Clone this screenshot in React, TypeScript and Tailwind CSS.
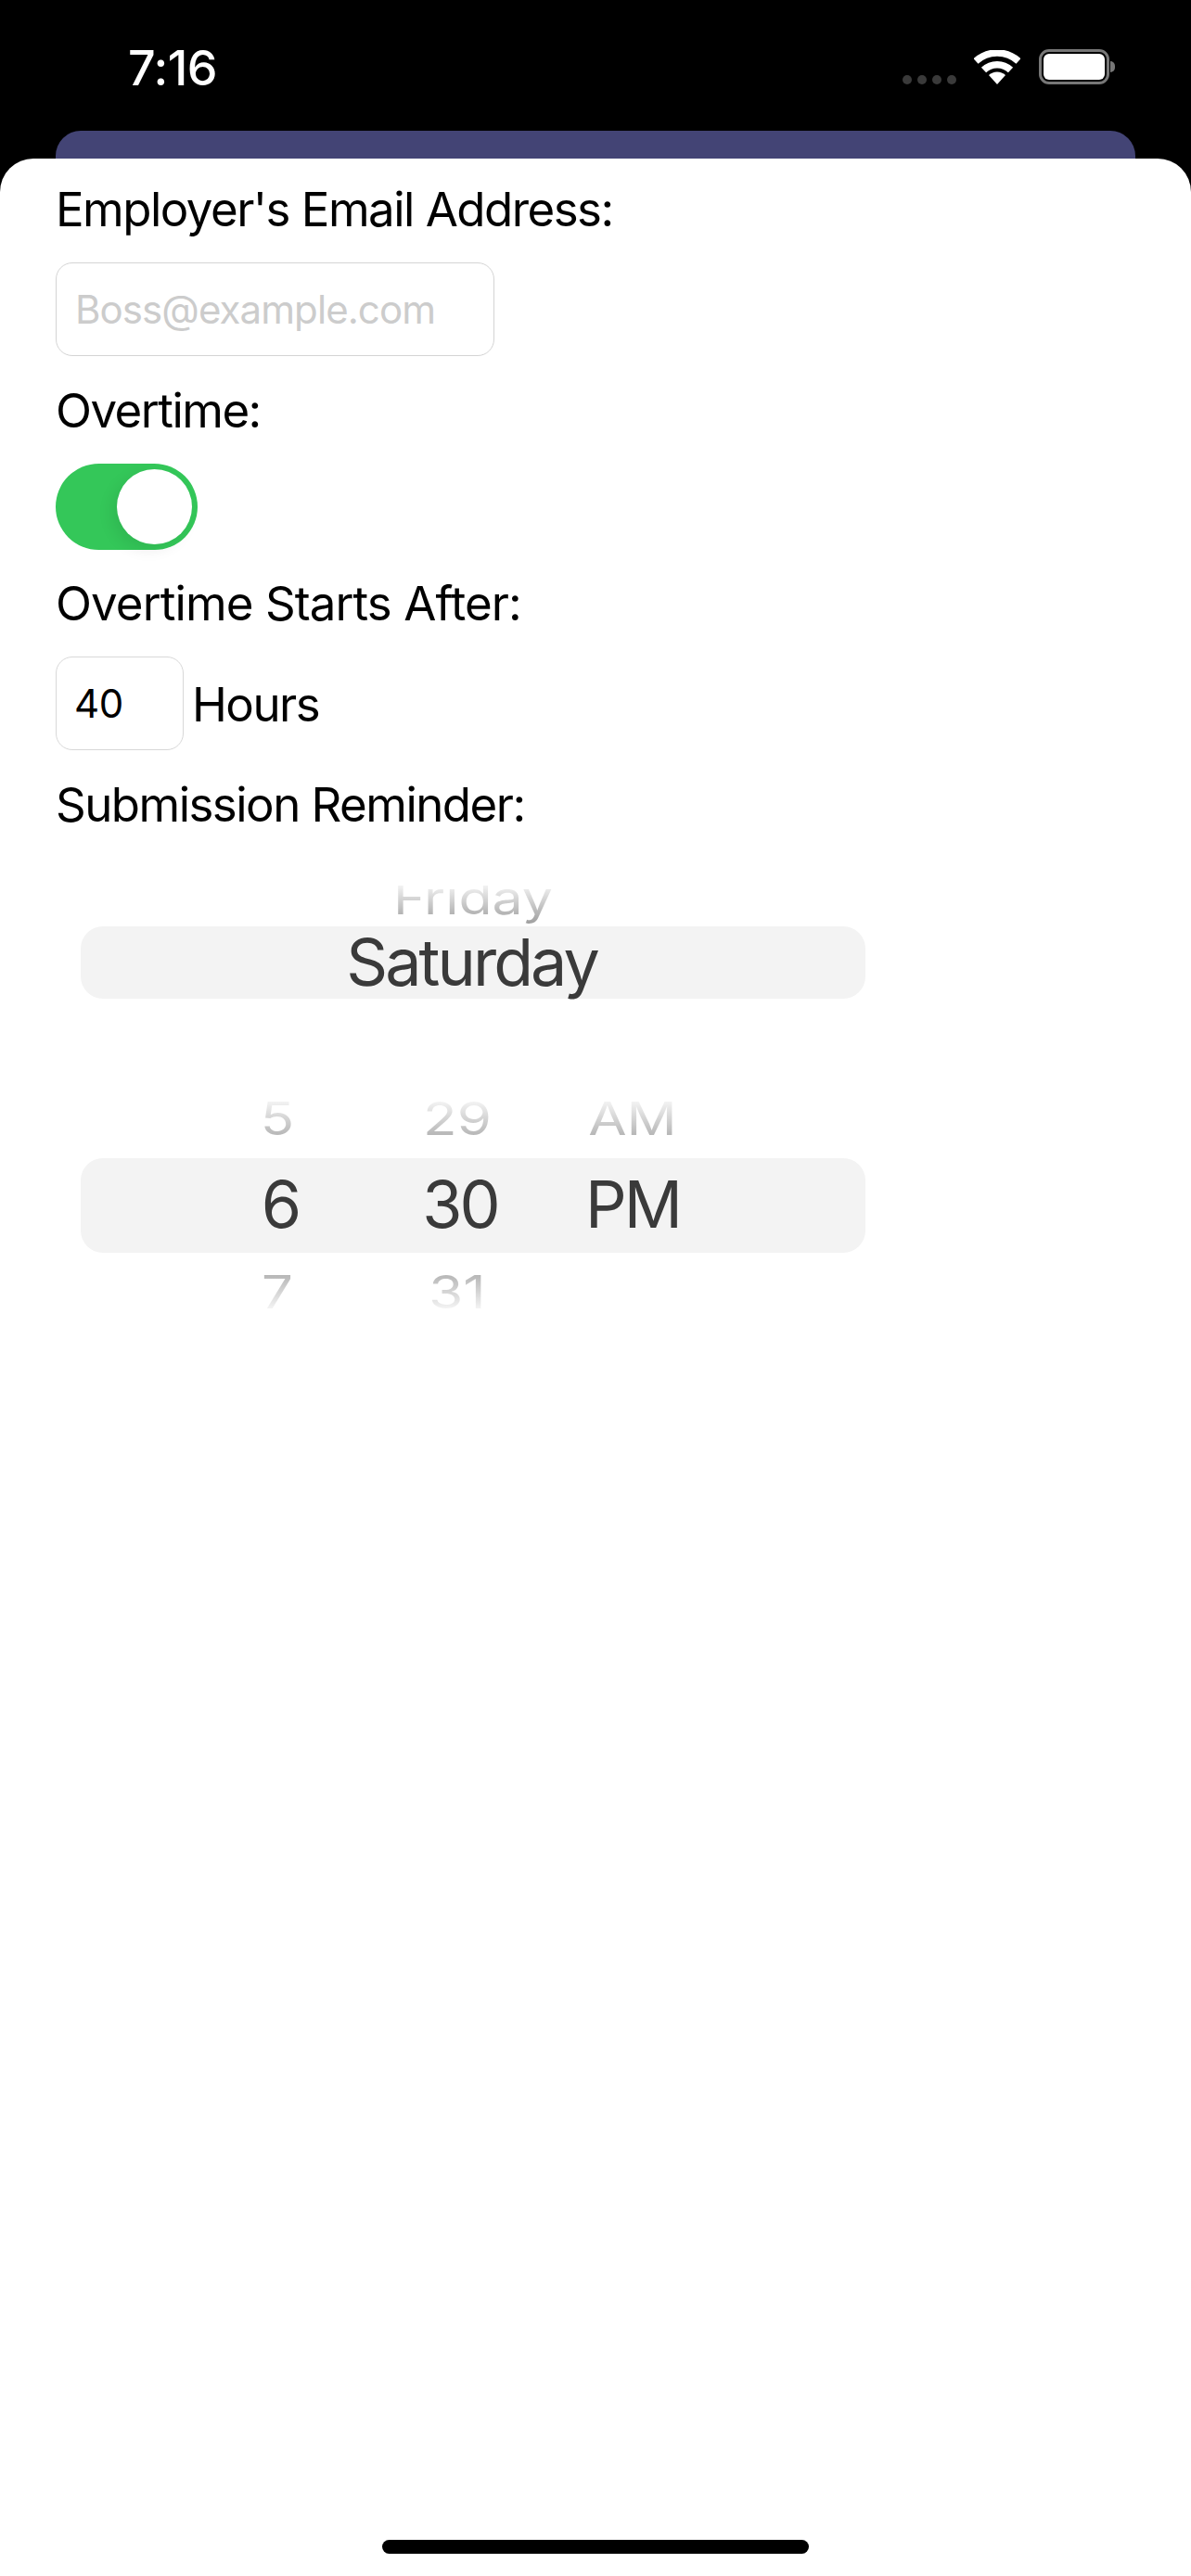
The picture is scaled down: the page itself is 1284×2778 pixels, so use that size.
const labelBase = "h-[61px] text-[51px] leading-[61px] text-black whitespace-nowrap";
const labelClass = `${labelBase} tracking-[-0.03em]`;

function Wifi() {
  return (
    <svg width="50" height="37" viewBox="0 0 50 37" fill="none">
      <path d="M2 12 A34 34 0 0 1 48 12" stroke="white" strokeWidth="7.5" />
      <path d="M10.5 21.5 A21 21 0 0 1 39.5 21.5" stroke="white" strokeWidth="7.5" />
      <path d="M25 37 L16 27 A13 13 0 0 1 34 27 Z" fill="white" />
    </svg>
  );
}

function StatusBar() {
  return (
    <div className="flex h-[141px] items-start pl-[138px]">
      <div className="mt-[46px] text-[52px] font-medium leading-[56px] tracking-[-0.01em] text-white">7:16</div>
      <div className="ml-auto mr-[82px] mt-[53px] flex items-end">
        <div className="mr-[19px] flex gap-[6px]">
          <span className="h-[10px] w-[10px] rounded-full bg-[#3a3a3a]" />
          <span className="h-[10px] w-[10px] rounded-full bg-[#3a3a3a]" />
          <span className="h-[10px] w-[10px] rounded-full bg-[#3a3a3a]" />
          <span className="h-[10px] w-[10px] rounded-full bg-[#3a3a3a]" />
        </div>
        <Wifi />
        <div className="ml-[20px] flex items-center">
          <div className="flex h-[38px] w-[76px] items-center justify-center rounded-[11px] border-[3px] border-[#777777]">
            <div className="h-[28px] w-[66px] rounded-[6px] bg-white" />
          </div>
          <div className="ml-[1px] h-[12px] w-[5px] rounded-r-full bg-[#777777]" />
        </div>
      </div>
    </div>
  );
}

function SideCell({ text, grad, w }: { text: string; grad: string; w: string }) {
  return (
    <div className={`flex items-center justify-center ${w}`}>
      <span className={`block h-[70px] origin-center scale-y-[0.82] bg-clip-text text-[60px] leading-[70px] text-transparent ${grad}`}>
        {text}
      </span>
    </div>
  );
}

function SideRow({ items, grad }: { items: string[]; grad: string }) {
  return (
    <div className="flex h-[36px] pl-[118px]">
      <SideCell text={items[0]} grad={grad} w="w-[188px]" />
      <SideCell text={items[1]} grad={grad} w="w-[200px]" />
      <SideCell text={items[2]} grad={grad} w="w-[178px]" />
    </div>
  );
}

export default function App() {
  const wheel = "text-[70px] tracking-[-0.042em] text-[#3a3a3a]";
  const up = "bg-linear-to-b from-[#f2f2f2] from-[20%] to-[#b8b8b8] to-[80%]";
  const down = "bg-linear-to-b from-[#b8b8b8] from-[20%] to-[#f2f2f2] to-[80%]";
  return (
    <div className="flex h-[2778px] w-[1284px] flex-col overflow-hidden bg-black font-['Inter',sans-serif]">
      <StatusBar />
      <div className="mx-[60px] h-[30px] shrink-0 rounded-t-[27px] bg-[#434475]" />
      <div className="relative flex-1 rounded-t-[36px] bg-white px-[60px] pt-[24px]">
        <div className={labelClass}>Employer's Email Address:</div>
        <div className="mt-[27px] flex h-[101px] w-[473px] items-center rounded-[18px] border-[1.5px] border-[#d4d4d4] pl-[20px] text-[42px] tracking-[-0.022em] text-[#cccccc]">
          Boss@example.com
        </div>
        <div className={`mt-[28px] ${labelClass}`}>Overtime:</div>
        <div className="mt-[27px] flex h-[93px] w-[153px] items-center justify-end rounded-full bg-[#34c759] pr-[6px]">
          <div className="h-[81px] w-[81px] rounded-full bg-white shadow-[-6px_6px_16px_rgba(0,0,0,0.08)]" />
        </div>
        <div className={`mt-[27px] ${labelBase} tracking-[-0.018em]`}>Overtime Starts After:</div>
        <div className="mt-[27px] flex items-center">
          <div className="flex h-[101px] w-[138px] items-center rounded-[18px] border-[1.5px] border-[#d8d8d8] pl-[19px] text-[42px] leading-[50px] tracking-[-0.01em] text-black">
            40
          </div>
          <div className="ml-[9px] mt-[2px] text-[51px] leading-[61px] tracking-[-0.03em] text-black">Hours</div>
        </div>
        <div className={`mt-[28px] ${labelClass}`}>Submission Reminder:</div>

        <div className="ml-[27px] mt-[57px] w-[846px]">
          <div className="flex h-[44px] justify-center overflow-hidden">
            <span className="-mt-[31px] block h-[90px] scale-y-[0.82] bg-linear-to-b from-[#f4f4f4] from-[30%] to-[#a0a0a0] to-[86%] bg-clip-text text-[59px] leading-[90px] text-transparent">
              Friday
            </span>
          </div>
          <div className={`flex h-[78px] items-center justify-center rounded-[24px] bg-[#f3f3f3] pb-[2px] pr-[3px] ${wheel}`}>Saturday</div>
        </div>

        <div className="ml-[27px] mt-[111px] w-[846px]">
          <SideRow items={["5", "29", "AM"]} grad={up} />
          <div className={`mt-[25px] flex h-[102px] items-center rounded-[24px] bg-[#f3f3f3] pb-[3px] pl-[118px] ${wheel}`}>
            <div className="w-[194px] text-center">6</div>
            <div className="w-[194px] text-center">30</div>
            <div className="w-[178px] text-center">PM</div>
          </div>
          <div className="mt-[24px]">
            <SideRow items={["7", "31", ""]} grad={down} />
          </div>
        </div>

        <div className="absolute bottom-[24px] left-1/2 h-[15px] w-[460px] -translate-x-1/2 rounded-full bg-black" />
      </div>
    </div>
  );
}
